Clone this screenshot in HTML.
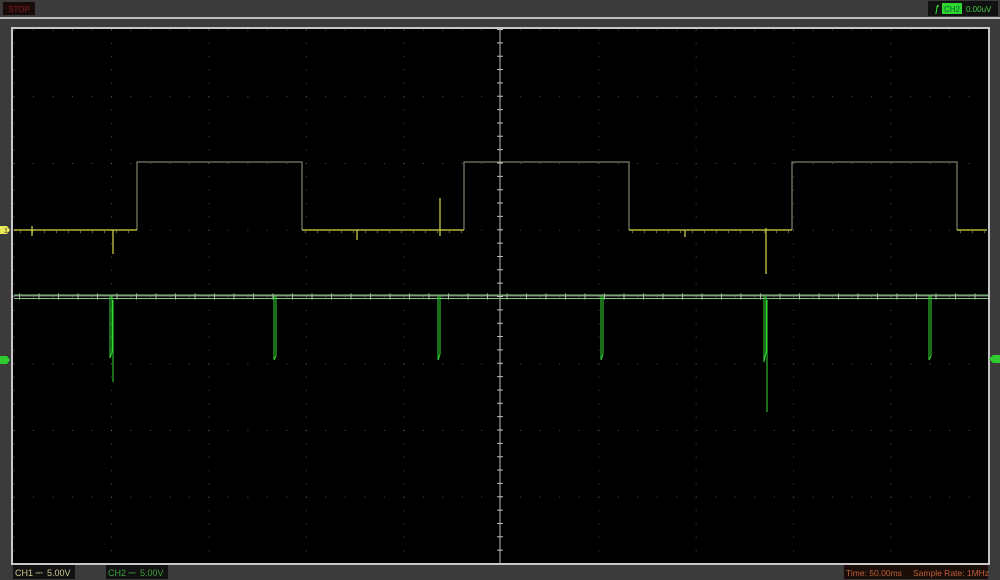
<!DOCTYPE html>
<html><head><style>
html,body{margin:0;padding:0;background:#3b3b3b;width:1000px;height:580px;overflow:hidden;font-family:"Liberation Sans",sans-serif}
</style></head><body>
<svg width="1000" height="580" viewBox="0 0 1000 580" xmlns="http://www.w3.org/2000/svg" style="position:absolute;left:0;top:0">
<defs>
<pattern id="g" x="13.5" y="29.5" width="97.45" height="66.75" patternUnits="userSpaceOnUse">
<rect x="0" y="0" width="1" height="1" fill="#777"/>
<rect x="19.5" y="0" width="1" height="1" fill="#555"/>
<rect x="39" y="0" width="1" height="1" fill="#555"/>
<rect x="58.5" y="0" width="1" height="1" fill="#555"/>
<rect x="78" y="0" width="1" height="1" fill="#555"/>
<rect x="0" y="13.35" width="1" height="1" fill="#555"/>
<rect x="0" y="26.7" width="1" height="1" fill="#555"/>
<rect x="0" y="40.05" width="1" height="1" fill="#555"/>
<rect x="0" y="53.4" width="1" height="1" fill="#555"/>
</pattern>
</defs>
<rect x="0" y="0" width="1000" height="580" fill="#3b3b3b"/>
<rect x="0" y="17" width="1000" height="2" fill="#bdbdbd"/>
<rect x="3" y="2" width="32" height="13" fill="#1a0b0b"/>
<text x="19" y="12" font-size="8" fill="#8a1a22" text-anchor="middle">STOP</text>
<rect x="928" y="1" width="70" height="15" fill="#111"/>
<text x="934" y="12" font-size="10" fill="#3f3" font-style="italic">ƒ</text>
<rect x="942" y="3" width="20" height="11" fill="#2fd42f"/>
<text x="952" y="12" font-size="8" fill="#063" text-anchor="middle">CH2</text>
<text x="966" y="12" font-size="8" fill="#4c4">0.00uV</text>
<rect x="13" y="29" width="976" height="535" fill="#000"/>
<rect x="13" y="29" width="976" height="535" fill="url(#g)"/>
<rect x="12" y="28" width="977" height="536" fill="none" stroke="#c8c8c8" stroke-width="2"/>
<line x1="500" y1="29" x2="500" y2="563" stroke="#bbb" stroke-width="1"/>
<line x1="13" y1="296" x2="988" y2="296" stroke="#777" stroke-width="1"/>
<line x1="13" y1="296.5" x2="988" y2="296.5" stroke="#bbb" stroke-width="6" stroke-dasharray="1 18.5" stroke-dashoffset="-6"/>
<line x1="500" y1="29" x2="500" y2="563" stroke="#bbb" stroke-width="6" stroke-dasharray="1 12.35"/>
<g stroke="#7fc87f" stroke-width="1" fill="none">
<line x1="14" y1="295" x2="988" y2="295"/>
<line x1="14" y1="298.5" x2="988" y2="298.5"/>
</g>
<g stroke="#33dd33" stroke-width="1" fill="none">
<polyline points="110,296 110,358 112,352 112,296"/><line x1="113" y1="300" x2="113" y2="382"/>
<polyline points="274,296 274,360 276,356 276,296"/>
<polyline points="438,296 438,360 440,354 440,296"/>
<polyline points="601,296 601,360 603,354 603,296"/>
<polyline points="764,296 764,362 766,352 766,296"/><line x1="767" y1="300" x2="767" y2="412"/>
<polyline points="929,296 929,360 931,356 931,296"/>
</g>
<polyline fill="none" stroke="#9b9b80" stroke-width="1" points="137,230 137,162 302,162 302,230"/>
<polyline fill="none" stroke="#9b9b80" stroke-width="1" points="464,230 464,162 629,162 629,230"/>
<polyline fill="none" stroke="#9b9b80" stroke-width="1" points="792,230 792,162 957,162 957,230"/>
<g stroke="#d8d84a" stroke-width="1.2">
<line x1="14" y1="230" x2="137" y2="230"/>
<line x1="302" y1="230" x2="464" y2="230"/>
<line x1="629" y1="230" x2="792" y2="230"/>
<line x1="957" y1="230" x2="987" y2="230"/>
<line x1="32" y1="226" x2="32" y2="236"/>
<line x1="113" y1="230" x2="113" y2="254"/>
<line x1="440" y1="198" x2="440" y2="236"/>
<line x1="357" y1="230" x2="357" y2="240"/>
<line x1="685" y1="230" x2="685" y2="237"/>
<line x1="766" y1="228" x2="766" y2="274"/>
</g>
<g stroke="#d8d84a" stroke-width="1" stroke-dasharray="1 11">
<line x1="20" y1="232" x2="135" y2="232"/>
<line x1="305" y1="232" x2="462" y2="232"/>
<line x1="632" y1="232" x2="790" y2="232"/>
<line x1="960" y1="232" x2="985" y2="232"/>
</g>
<polygon points="0,226 7,226 10,230 7,234 0,234" fill="#e8e85a"/>
<text x="4" y="233" font-size="7" fill="#333">1</text>
<polygon points="0,356 7,356 10,360 7,364 0,364" fill="#2ecc2e"/>
<polygon points="1000,355 993,355 989,359 993,363 1000,363" fill="#2ecc2e"/>
<rect x="13" y="565" width="62" height="14" fill="#111"/>
<text x="15" y="576" font-size="9" fill="#c8c890">CH1 ⎓</text>
<text x="47" y="576" font-size="9" fill="#c8c890">5.00V</text>
<rect x="106" y="565" width="62" height="14" fill="#111"/>
<text x="108" y="576" font-size="9" fill="#3aa33a">CH2 ⎓</text>
<text x="140" y="576" font-size="9" fill="#3aa33a">5.00V</text>
<rect x="844" y="565" width="144" height="14" fill="#1a0d08"/>
<text x="846" y="576" font-size="8.5" fill="#c0603a">Time: 50.00ms</text>
<text x="913" y="576" font-size="8.5" fill="#c0603a">Sample Rate: 1MHz</text>
</svg>
</body></html>
